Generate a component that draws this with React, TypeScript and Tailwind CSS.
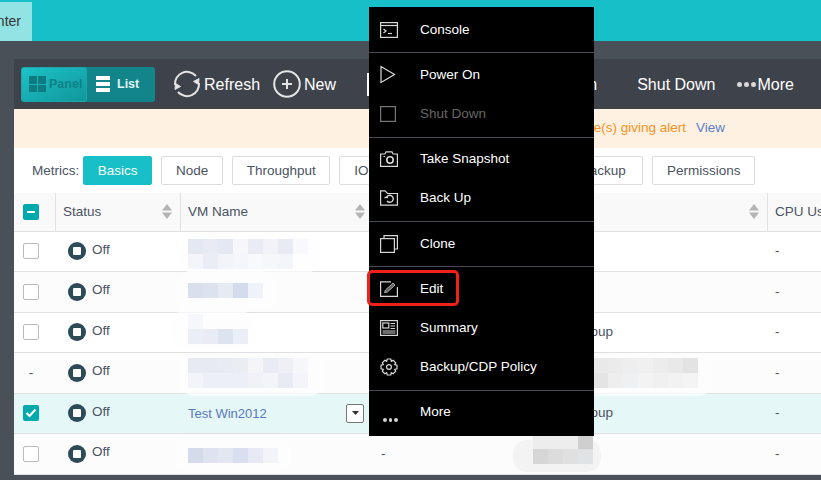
import type { ReactNode } from "react"

const cols = "grid grid-cols-[42px_125px_192px_160px_235px_1fr]"

type MosaicData = {
  cells: string[][]
  offset: string
  blob: string
}

type Row = {
  check: "empty" | "dash" | "checked"
  name?: MosaicData
  link?: string
  group?: string
  owner?: MosaicData
}

const rows: Row[] = [
  {
    check: "empty",
    name: {
      offset: "mt-[7px]",
      blob: "-left-2 -right-3 -top-1 -bottom-1 bg-[#fdfdfd]/70",
      cells: [
        ["#e4e8f2", "#e8ebf4", "#e4e8f3", "#f6f7fb", "#eaecf5", "#f1f3f9", "#e8ebf4", "#f8f9fc"],
        ["#f3f5fa", "#eaedf6", "#f2f4fa", "#f4f6fb", "#f8f9fc", "#f6f7fb", "#f4f5fa", "#fefefe"],
      ],
    },
  },
  {
    check: "empty",
    name: {
      offset: "mt-[11px]",
      blob: "-left-3 -right-3 -top-3 -bottom-3 bg-[#fdfdfd]/70",
      cells: [["#d9dfed", "#dde2ef", "#e6eaf3", "#d3dbec", "#f0f2f9"]],
    },
  },
  {
    check: "empty",
    group: "Test Group",
    name: {
      offset: "mt-[1px]",
      blob: "-left-4 -right-1 -top-1 -bottom-1 bg-[#fdfdfd]/70",
      cells: [
        ["#f5f7fc", "#fdfdfe", "#fdfdfe", "#fdfdfe"],
        ["#eaeef7", "#e9ecf5", "#dee3f0", "#eaeef7"],
      ],
    },
  },
  {
    check: "dash",
    name: {
      offset: "mt-[5px]",
      blob: "-left-2 -right-4 -top-1 -bottom-2 bg-[#fdfdfd]/70",
      cells: [
        ["#e7e9f3", "#e7e9f3", "#e9ebf4", "#ebedf5", "#f4f5f9", "#e9ebf5", "#eff0f7", "#f6f7fb"],
        ["#f3f4f9", "#eceff7", "#eceff7", "#eceff7", "#f0f2f8", "#f2f4f9", "#e8eaf4", "#f4f5fa"],
      ],
    },
    owner: {
      offset: "mt-[5px]",
      blob: "-left-2 -right-[14px] -top-1 -bottom-2 bg-[#fdfdfd]/70",
      cells: [
        ["#e9e9e9", "#e9e9e9", "#e9e9e9", "#e9e9e9", "#e9e9e9", "#ebebec", "#eeeeee", "#f0f0f0", "#ececec", "#e9e9e9", "#e3e3e3"],
        ["#e4e4e4", "#e4e4e4", "#e4e4e4", "#e4e4e4", "#e4e4e4", "#eeeeef", "#eff0f1", "#f3f3f3", "#f0f0f0", "#f2f2f2", "#f4f4f4"],
      ],
    },
  },
  { check: "checked", link: "Test Win2012", group: "Test Group" },
  {
    check: "empty",
    name: {
      offset: "mt-[14px]",
      blob: "-left-3 -right-3 -top-3 -bottom-2 bg-[#fdfdfd]/70",
      cells: [["#d5dbea", "#dfe3f0", "#e3e7f2", "#d9dff0", "#e7eaf4", "#f2f4fa"]],
    },
    owner: {
      offset: "mt-0",
      blob: "-left-5 -right-2 top-[6px] -bottom-2 bg-[#f3f3f3]",
      cells: [
        ["#ededed", "#ededed", "#ededed", "#cfcfcf"],
        ["#d6d6d6", "#dcdcdc", "#e0e0e0", "#dfe3e6"],
      ],
    },
  },
]

const rowBg = ["bg-white", "bg-[#fcfcfc]", "bg-white", "bg-[#fcfcfc]", "bg-[#e5f7f7]", "bg-[#fcfcfc]"]

function Mosaic({ data }: { data: MosaicData }) {
  return (
    <div className={`relative ${data.offset}`}>
      <div className={`absolute rounded-[14px] ${data.blob}`} />
      {data.cells.map((line, i) => (
        <div key={i} className="relative flex">
          {line.map((color, j) => (
            <div key={j} className="h-[15px] w-[15px]" style={{ backgroundColor: color }} />
          ))}
        </div>
      ))}
    </div>
  )
}

function SortArrows() {
  return (
    <svg width="10" height="15" viewBox="0 0 10 15" className="shrink-0">
      <path d="M5 0 10 6.5H0Z" fill="#b4b4b4" />
      <path d="M0 8.5H10L5 15Z" fill="#b4b4b4" />
    </svg>
  )
}

function Checkbox({ kind }: { kind: Row["check"] }) {
  if (kind === "dash") return <span className="w-4 text-center">-</span>
  if (kind === "checked") {
    return (
      <div className="flex h-4 w-4 items-center justify-center rounded-[2px] bg-[#00a9ad]">
        <svg width="12" height="10" viewBox="0 0 12 10">
          <path d="M1.5 5 4.5 8 10.5 1.5" fill="none" stroke="#fff" strokeWidth="2.2" />
        </svg>
      </div>
    )
  }
  return <div className="h-4 w-4 rounded-[2px] border border-[#bbb] bg-white" />
}

function StatusOff() {
  return (
    <div className="flex items-center pl-[12px]">
      <div className="flex h-[18px] w-[18px] items-center justify-center rounded-full bg-[#2c4a57]">
        <div className="h-2 w-2 rounded-[1px] bg-white" />
      </div>
      <span className="mb-[3px] ml-[6px]">Off</span>
    </div>
  )
}

function HeaderCell({ label, sort, border = true }: { label?: string; sort?: boolean; border?: boolean }) {
  return (
    <div className={`flex items-center justify-between pl-[7px] pr-[8px] ${border ? "border-r border-[#e2e2e2]" : ""}`}>
      <span className="whitespace-nowrap">{label}</span>
      {sort && <SortArrows />}
    </div>
  )
}

function MetricButton({ children, className = "" }: { children: ReactNode; className?: string }) {
  return (
    <div className={`flex h-[29px] items-center justify-center rounded-[2px] border pt-[2px] ${className}`}>
      {children}
    </div>
  )
}

function Icon({ children, w = 18, h = 18 }: { children: ReactNode; w?: number; h?: number }) {
  return (
    <svg width={w} height={h} viewBox={`0 0 ${w} ${h}`} fill="none" stroke="#d8d8d8" strokeWidth="1.2">
      {children}
    </svg>
  )
}

function MenuItem({ icon, label, disabled }: { icon: ReactNode; label: string; disabled?: boolean }) {
  return (
    <div className={`flex h-[39px] items-center pl-[11px] ${disabled ? "text-[#666]" : "text-white"}`}>
      <div className="flex w-[18px] shrink-0 items-center justify-center">{icon}</div>
      <span className="ml-[22px] mt-[2px]">{label}</span>
    </div>
  )
}

function MenuSep() {
  return <div className="h-px bg-[#474c54]" />
}

function ContextMenu() {
  return (
    <div className="absolute left-[369px] top-[7px] h-[429px] w-[225px] bg-black text-[13.5px]">
      <div className="pb-[3px] pt-[3px]">
        <MenuItem
          label="Console"
          icon={
            <Icon h={16}>
              <rect x="0.6" y="0.6" width="16.8" height="14.8" />
              <path d="M1 3.5H17" />
              <path d="M3.5 7 6 9 3.5 11" />
              <path d="M8 11.5H12" />
            </Icon>
          }
        />
      </div>
      <MenuSep />
      <div className="pb-[4px] pt-[2px]">
        <MenuItem
          label="Power On"
          icon={
            <Icon h={19}>
              <path d="M1 1.500 14.500 9.500 1 17.500Z" />
            </Icon>
          }
        />
        <MenuItem
          label="Shut Down"
          disabled
          icon={
            <div className="mr-[2px]">
              <svg width="16" height="16" viewBox="0 0 16 16" fill="none" stroke="#777" strokeWidth="1.2">
                <rect x="0.6" y="0.6" width="14.8" height="14.8" />
              </svg>
            </div>
          }
        />
      </div>
      <MenuSep />
      <div className="pb-[4px] pt-px">
        <MenuItem
          label="Take Snapshot"
          icon={
            <Icon h={16}>
              <path d="M0.6 3H5L6 .8H12L13 3H17.4V15.4H0.6Z" />
              <circle cx="10" cy="9" r="3.2" strokeWidth="1.6" />
              <path d="M3.5 5.500H5" />
            </Icon>
          }
        />
        <MenuItem
          label="Back Up"
          icon={
            <Icon h={16}>
              <path d="M0.6 0.8H5L7.500 3.500H17.400V15.200H0.6Z" />
              <path d="M6.500 7.500A3.500 3.500 0 1 1 7 11" strokeWidth="1.4" />
              <path d="M4.500 7.500H8" strokeWidth="1.4" />
            </Icon>
          }
        />
      </div>
      <MenuSep />
      <div className="pb-[3px] pt-[2px]">
        <MenuItem
          label="Clone"
          icon={
            <Icon>
              <rect x="0.6" y="3.6" width="13.8" height="13.8" />
              <path d="M4 3.500V.6H17.400V14H14.500" />
            </Icon>
          }
        />
      </div>
      <MenuSep />
      <div className="pb-[4px] pt-[2px]">
        <div className="relative">
          <MenuItem
            label="Edit"
            icon={
              <Icon h={16}>
                <path d="M11 .8H.6V15.400H17.400V6" />
                <path d="M4.500 11.500 5.500 9 13 2 15 4 7.500 11Z" fill="#666" stroke="#a8a8a8" strokeWidth="1" />
              </Icon>
            }
          />
          {/* annotation box from the screenshot */}
          <div className="absolute left-[-2px] top-[1px] h-[36px] w-[92px] rounded-[5px] border-[3px] border-[#f0201a]" />
        </div>
        <MenuItem
          label="Summary"
          icon={
            <Icon h={16}>
              <rect x="0.6" y="0.6" width="16.8" height="14.8" />
              <rect x="2.8" y="3" width="6" height="5" />
              <path d="M10.500 3.500H15M10.500 6H15M10.500 8.500H15M2.500 11H15.500M2.500 13H15.500" />
            </Icon>
          }
        />
        <MenuItem
          label="Backup/CDP Policy"
          icon={
            <Icon>
              <path d="M7.200 1H10.800L11.300 3.300 13.200 2.300 15.700 4.800 14.700 6.700 17 7.200V10.800L14.700 11.300 15.700 13.200 13.200 15.700 11.300 14.700 10.800 17H7.200L6.700 14.700 4.800 15.700 2.300 13.200 3.300 11.300 1 10.800V7.200L3.300 6.700 2.300 4.800 4.800 2.300 6.700 3.300Z" />
              <circle cx="9" cy="9" r="2.400" />
            </Icon>
          }
        />
      </div>
      <MenuSep />
      <div className="pb-[5px] pt-px">
        <div className="relative">
          <MenuItem label="More" icon={<div className="h-[18px] w-[18px]" />} />
          <div className="absolute left-[14px] top-[26px] flex gap-[2px]">
            <div className="h-[3.5px] w-[3.5px] rounded-full bg-[#d2d2d2]" />
            <div className="h-[3.5px] w-[3.5px] rounded-full bg-[#d2d2d2]" />
            <div className="h-[3.5px] w-[3.5px] rounded-full bg-[#d2d2d2]" />
          </div>
        </div>
      </div>
    </div>
  )
}

const plainButton = "border-[#dcdcdc] bg-white"

export default function App() {
  return (
    <div className="relative h-[480px] w-[821px] overflow-hidden bg-[#4a5058] font-['Liberation_Sans',Arial,sans-serif] text-[13.5px] text-[#4b5362]">
      {/* top nav */}
      <div className="flex h-[41px] items-end bg-[#17c0c8]">
        <div className="flex h-[39px] w-[32px] items-center justify-end overflow-hidden bg-[#92e3e4] pr-[11px] text-[14px] text-[#333]">
          <span>Center</span>
        </div>
      </div>

      <div className="ml-[14px] mt-[18px]">
        {/* toolbar */}
        <div className="flex h-[50px] items-center bg-[#3e424a] text-[16px] text-white">
          <div className="ml-[7px] flex h-[35px] w-[134px] overflow-hidden rounded-[3px] bg-[#12858a] text-[12.5px]">
            <div className="flex w-[66px] items-center rounded-[3px] border border-[#1aa7ab] bg-gradient-to-br from-[#1cc3c7] to-[#11979c] pl-[7px] font-bold text-[#0e8287]">
              <div className="grid h-[16px] w-[17px] grid-cols-2 gap-px">
                <div className="bg-[#0d7b80]" />
                <div className="bg-[#0d7b80]" />
                <div className="bg-[#0d7b80]" />
                <div className="bg-[#0d7b80]" />
              </div>
              <span className="ml-[3px]">Panel</span>
            </div>
            <div className="ml-[9px] flex h-full flex-col justify-center gap-[2.5px]">
              <div className="h-[3.5px] w-[14px] bg-white" />
              <div className="h-[3.5px] w-[14px] bg-white" />
              <div className="h-[3.5px] w-[14px] bg-white" />
            </div>
            <span className="ml-[7px] self-center font-bold text-[#dff3f3]">List</span>
          </div>

          <svg width="28" height="28" viewBox="0 0 28 28" fill="none" stroke="#e4e4e4" strokeWidth="2" className="ml-[18px]">
            <path d="M2 15A12 12 0 0 1 23 6" />
            <path d="M26 13A12 12 0 0 1 5 22" />
            <path d="M26 8.500 25.500 14.500 20.500 11.500Z" fill="#e4e4e4" strokeWidth="1" />
            <path d="M2 19.500 2.500 13.500 7.500 16.500Z" fill="#e4e4e4" strokeWidth="1" />
          </svg>
          <span className="ml-[3px] mt-[2px]">Refresh</span>

          <svg width="28" height="28" viewBox="0 0 28 28" fill="none" stroke="#e4e4e4" className="ml-[13px]">
            <circle cx="14" cy="14" r="12.800" strokeWidth="2" />
            <path d="M14 9V19M9 14H19" strokeWidth="2" />
          </svg>
          <span className="ml-[3px] mt-[2px]">New</span>

          <div className="ml-[31px] h-[23px] w-[2px] shrink-0 bg-white" />
          <span className="ml-[157px] mt-[2px] whitespace-nowrap">Power On</span>
          <span className="ml-[40px] mt-[2px] whitespace-nowrap">Shut Down</span>
          <div className="ml-[22px] flex gap-[2px]">
            <div className="h-[5px] w-[5px] rounded-full bg-[#d8d8d8]" />
            <div className="h-[5px] w-[5px] rounded-full bg-[#d8d8d8]" />
            <div className="h-[5px] w-[5px] rounded-full bg-[#d8d8d8]" />
          </div>
          <span className="ml-[1px] mt-[2px]">More</span>
        </div>

        {/* alert */}
        <div className="flex h-[39px] items-center justify-end bg-[#fef1e2] pr-[96px]">
          <span className="whitespace-nowrap text-[#f7931e]">node(s) giving alert</span>
          <span className="ml-[10px] text-[#5b7fc7]">View</span>
        </div>

        {/* metrics tabs */}
        <div className="flex h-[45px] items-center gap-[9px] bg-white pl-[18px]">
          <span className="-mr-[5px] mt-[2px]">Metrics:</span>
          <MetricButton className="w-[69px] border-[#17c0c8] bg-[#17c0c8] text-white">Basics</MetricButton>
          <MetricButton className={`w-[62px] ${plainButton}`}>Node</MetricButton>
          <MetricButton className={`w-[98px] ${plainButton}`}>Throughput</MetricButton>
          <MetricButton className={`w-[215px] !justify-start pl-[14px] ${plainButton}`}>IO</MetricButton>
          <MetricButton className={`w-[80px] ${plainButton}`}>Backup</MetricButton>
          <MetricButton className={`w-[103px] ${plainButton}`}>Permissions</MetricButton>
        </div>

        {/* table */}
        <div className={`${cols} h-[38.5px] border-b border-[#e0e0e0] bg-[#f9f9f9]`}>
          <div className="flex items-center border-r border-[#e2e2e2] pl-[9px]">
            <div className="flex h-4 w-4 items-center justify-center rounded-[2px] bg-[#00a9ad]">
              <div className="h-[2px] w-[8px] bg-white" />
            </div>
          </div>
          <HeaderCell label="Status" sort />
          <HeaderCell label="VM Name" sort border={false} />
          <HeaderCell border={false} />
          <HeaderCell sort />
          <HeaderCell label="CPU Usage" border={false} />
        </div>

        {rows.map((row, i) => (
          <div key={i} className={`${cols} h-[40.5px] border-b border-[#e0e0e0] ${rowBg[i]}`}>
            <div className="flex items-center pl-[9px]">
              <Checkbox kind={row.check} />
            </div>
            <StatusOff />
            <div className="flex items-start pl-[7px]">
              {row.name && <Mosaic data={row.name} />}
              {row.link && (
                <div className="flex h-full w-full items-center justify-between pr-[9px]">
                  <span className="text-[13px] text-[#5a78c0]">{row.link}</span>
                  <div className="flex h-[19px] w-[18px] items-center justify-center rounded-[2px] border border-[#777] bg-white">
                    <svg width="7" height="4" viewBox="0 0 7 4">
                      <path d="M0 0H7L3.500 4Z" fill="#333" />
                    </svg>
                  </div>
                </div>
              )}
            </div>
            <div className="flex items-center pl-[8px]">-</div>
            <div className="flex items-start">
              {row.group && <span className="self-center whitespace-nowrap pl-[14px]">{row.group}</span>}
              {row.owner && <Mosaic data={row.owner} />}
            </div>
            <div className="flex items-center pl-[7px]">-</div>
          </div>
        ))}
      </div>

      <ContextMenu />
    </div>
  )
}
